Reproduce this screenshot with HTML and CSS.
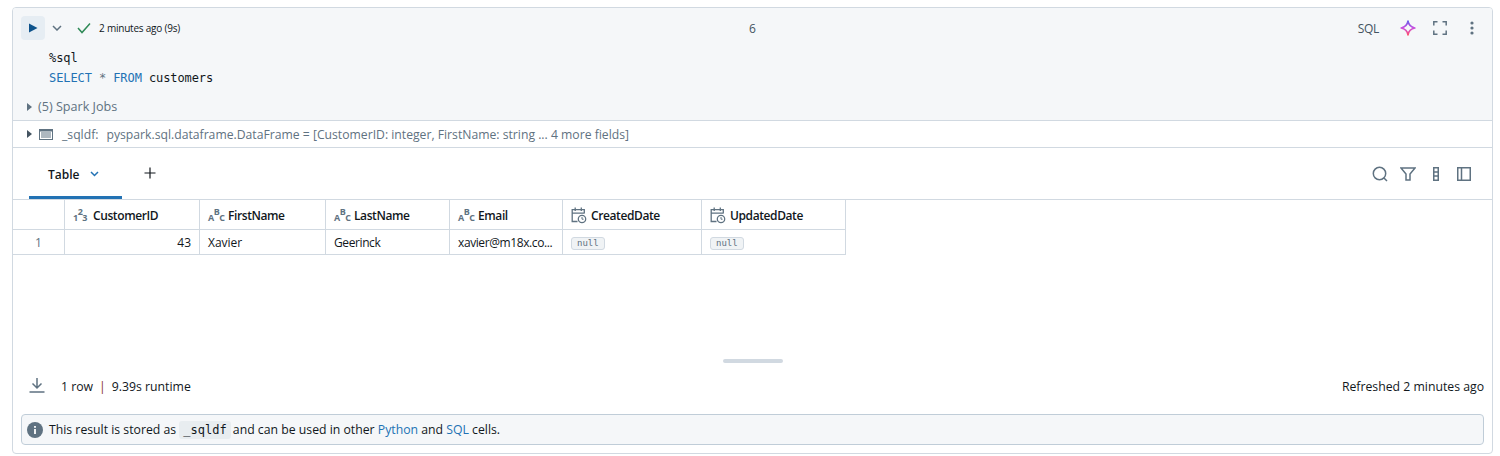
FILE: index.html
```html
<!DOCTYPE html>
<html lang="en">
<head>
<meta charset="utf-8">
<title>Notebook cell</title>
<link rel="stylesheet" href="styles.css">
</head>
<body>
<section class="cell">
  <div class="cell-top">
    <div class="toolbar">
      <div class="toolbar-left">
        <button class="run-btn" aria-label="Run"><svg width="10" height="10" viewBox="0 0 10 10"><path d="M1 0.5 L9.5 5 L1 9.5Z" fill="#0e538b"/></svg></button>
        <svg class="chev" width="10" height="6" viewBox="0 0 10 6"><path d="M1 1 L5 5 L9 1" fill="none" stroke="#5f7281" stroke-width="1.5"/></svg>
        <svg class="check" width="14" height="12" viewBox="0 0 14 12"><path d="M1 6 L5 10.5 L13 1.5" fill="none" stroke="#2f8a57" stroke-width="1.5"/></svg>
        <span class="run-status">2 minutes ago (9s)</span>
      </div>
      <div class="cell-num">6</div>
      <div class="toolbar-right">
        <span class="lang">SQL</span>
        <svg class="ai" width="16" height="16" viewBox="0 0 16 16"><defs><linearGradient id="spark" x1="0" y1="0" x2="0" y2="1"><stop offset="0" stop-color="#6a5ce8"/><stop offset=".5" stop-color="#c94fe0"/><stop offset="1" stop-color="#ff4f6e"/></linearGradient></defs><path d="M8 1.2 Q9 6.9 14.8 8 Q9 9.1 8 14.8 Q7 9.1 1.2 8 Q7 6.9 8 1.2Z" fill="none" stroke="url(#spark)" stroke-width="1.7" stroke-linejoin="round"/></svg>
        <svg class="full" width="14" height="14" viewBox="0 0 14 14"><path d="M0.8 4.5 V0.8 H4.5 M9.5 0.8 H13.2 V4.5 M13.2 9.5 V13.2 H9.5 M4.5 13.2 H0.8 V9.5" fill="none" stroke="#5f7281" stroke-width="1.5"/></svg>
        <svg class="kebab" width="4" height="14" viewBox="0 0 4 14"><circle cx="2" cy="2" r="1.6" fill="#5f7281"/><circle cx="2" cy="7" r="1.6" fill="#5f7281"/><circle cx="2" cy="12" r="1.6" fill="#5f7281"/></svg>
      </div>
    </div>
    <pre class="code">%sql
<span class="kw">SELECT</span> <span class="op">*</span> <span class="kw">FROM</span> customers</pre>
    <div class="jobs"><span class="tri"></span>(5) Spark Jobs</div>
  </div>

  <div class="schema">
    <span class="tri dark"></span>
    <svg class="df-icon" width="14" height="11" viewBox="0 0 14 11"><rect x=".5" y=".5" width="13" height="10" fill="#fff" stroke="#5f7281"/><path d="M0 1.5H14M2 4H12M2 6H12M2 8H12" stroke="#5f7281" stroke-width="1.2"/><rect x="0" y="0" width="14" height="2.5" fill="#5f7281"/></svg>
    <span class="df-name">_sqldf:</span>
    <span class="df-type">pyspark.sql.dataframe.DataFrame = [CustomerID: integer, FirstName: string ... 4 more fields]</span>
  </div>

  <div class="tabs">
    <div class="tab-list">
      <div class="tab">Table <svg class="tab-chev" width="9" height="6" viewBox="0 0 9 6"><path d="M1 1 L4.5 4.5 L8 1" fill="none" stroke="#2272b4" stroke-width="1.5"/></svg></div>
      <svg class="plus" width="12" height="12" viewBox="0 0 12 12"><path d="M6 .5V11.5M.5 6H11.5" stroke="#11171c" stroke-width="1.2"/></svg>
    </div>
    <div class="tab-tools">
      <svg width="16" height="16" viewBox="0 0 16 16"><circle cx="7.5" cy="7.5" r="6.2" fill="none" stroke="#5f7281" stroke-width="1.5"/><path d="M12 12 L15 15" stroke="#5f7281" stroke-width="1.5"/></svg>
      <svg width="16" height="14" viewBox="0 0 16 14"><path d="M1 1 H15 L10 7 V13 H6 V7 Z" fill="none" stroke="#5f7281" stroke-width="1.5"/></svg>
      <svg class="cols" width="6" height="14" viewBox="0 0 6 14"><rect x=".75" y=".75" width="4.5" height="12.5" fill="none" stroke="#5f7281" stroke-width="1.5"/><path d="M0 5H6M0 9H6" stroke="#5f7281" stroke-width="1.5"/></svg>
      <svg width="14" height="14" viewBox="0 0 14 14"><rect x=".75" y=".75" width="12.5" height="12.5" fill="none" stroke="#5f7281" stroke-width="1.5"/><path d="M4.5 1V13" stroke="#5f7281" stroke-width="1.5"/></svg>
    </div>
  </div>

  <div class="table-area">
    <table class="grid">
      <colgroup>
        <col class="c-idx"><col class="c-id"><col class="c-first"><col class="c-last"><col class="c-email"><col class="c-created"><col class="c-updated">
      </colgroup>
      <thead>
        <tr>
          <th></th>
          <th><span class="th-in"><span class="type"><i>1</i><i class="up">2</i><i>3</i></span>CustomerID</span></th>
          <th><span class="th-in"><span class="type"><i>A</i><i class="up">B</i><i>C</i></span>FirstName</span></th>
          <th><span class="th-in"><span class="type"><i>A</i><i class="up">B</i><i>C</i></span>LastName</span></th>
          <th><span class="th-in"><span class="type"><i>A</i><i class="up">B</i><i>C</i></span>Email</span></th>
          <th><span class="th-in"><svg class="cal" width="16" height="17" viewBox="0 0 16 17"><path d="M6.5 14.5 H1.2 V2.7 H13.3 V6.5 M1.2 6.2 H13.3 M4.2 .5 V4 M10.3 .5 V4" fill="none" stroke="#5f7281" stroke-width="1.3"/><circle cx="11" cy="12" r="3.7" fill="none" stroke="#5f7281" stroke-width="1.3"/><path d="M11 10 V12.2 H12.6" fill="none" stroke="#5f7281" stroke-width="1"/></svg>CreatedDate</span></th>
          <th><span class="th-in"><svg class="cal" width="16" height="17" viewBox="0 0 16 17"><path d="M6.5 14.5 H1.2 V2.7 H13.3 V6.5 M1.2 6.2 H13.3 M4.2 .5 V4 M10.3 .5 V4" fill="none" stroke="#5f7281" stroke-width="1.3"/><circle cx="11" cy="12" r="3.7" fill="none" stroke="#5f7281" stroke-width="1.3"/><path d="M11 10 V12.2 H12.6" fill="none" stroke="#5f7281" stroke-width="1"/></svg>UpdatedDate</span></th>
        </tr>
      </thead>
      <tbody>
        <tr>
          <td class="idx">1</td>
          <td class="right">43</td>
          <td>Xavier</td>
          <td class="tight">Geerinck</td>
          <td class="tight">xavier@m18x.co...</td>
          <td><span class="null">null</span></td>
          <td><span class="null">null</span></td>
        </tr>
      </tbody>
    </table>
    <div class="handle-row"><div class="handle"></div></div>
  </div>

  <div class="footer">
    <div class="foot-left">
      <svg class="dl" width="16" height="15" viewBox="0 0 16 15"><path d="M8 0V9.5M3.5 5.5 L8 10 L12.5 5.5M.5 14H15.5" fill="none" stroke="#5f7281" stroke-width="1.5"/></svg>
      <span>1 row<span class="sep">|</span>9.39s runtime</span>
    </div>
    <span>Refreshed 2 minutes ago</span>
  </div>

  <div class="notice">
    <svg class="info" width="16" height="16" viewBox="0 0 16 16"><circle cx="8" cy="8" r="8" fill="#5f7281"/><rect x="7.1" y="7" width="1.8" height="5" fill="#fff"/><rect x="7.1" y="4" width="1.8" height="1.8" fill="#fff"/></svg>
    <span>This result is stored as <code>_sqldf</code> and can be used in other <a href="#">Python</a> and <a href="#">SQL</a> cells.</span>
  </div>
</section>
</body>
</html>
```
FILE: styles.css
```css
* { box-sizing: border-box; }
html, body { margin: 0; padding: 0; background: #fff; }
body {
  font-family: "Open Sans", "Noto Sans", "Liberation Sans", sans-serif;
  font-size: 12.25px;
  color: #11171c;
  padding: 7px 7px 0 12px;
  height: 456px;
  overflow: hidden;
}
.cell {
  width: 1481px;
  height: 447px;
  border: 1px solid #d1d9e1;
  border-radius: 4px;
  overflow: hidden;
  display: flex;
  flex-direction: column;
}
.cell-top {
  background: #f5f7f9;
  height: 113px;
  border-bottom: 1px solid #d1d9e1;
  flex: none;
}
.toolbar {
  display: grid;
  grid-template-columns: 1fr auto 1fr;
  align-items: center;
  height: 24px;
  margin-top: 8px;
  padding: 0 18px 0 8px;
}
.toolbar-left, .toolbar-right { display: flex; align-items: center; }
.toolbar-right { justify-content: flex-end; }
.run-btn {
  width: 24px;
  height: 24px;
  border: 0;
  padding: 0;
  border-radius: 4px;
  background: #e6edf3;
  display: flex;
  align-items: center;
  justify-content: center;
}
.chev { margin-left: 7px; }
.check { margin-left: 15px; }
.run-status { margin-left: 8px; font-size: 10px; letter-spacing: -0.22px; }
.cell-num { color: #445461; font-size: 12px; margin-left: 10px; }
.lang { color: #445461; font-size: 12px; letter-spacing: -0.3px; }
.ai { margin-left: 21px; }
.full { margin-left: 17px; }
.kebab { margin-left: 23px; }
.code {
  margin: 8px 0 0 36px;
  font-family: "DejaVu Sans Mono", "Liberation Mono", monospace;
  font-size: 12px;
  letter-spacing: -0.09px;
  line-height: 20px;
  color: #11171c;
}
.kw { color: #2272b4; }
.op { color: #5f7281; }
.jobs {
  display: flex;
  align-items: center;
  margin: 10px 0 0 14px;
  color: #5f7281;
  font-size: 12.6px;
  line-height: 18px;
}
.tri {
  width: 0;
  height: 0;
  border-left: 5px solid #5f7281;
  border-top: 4px solid transparent;
  border-bottom: 4px solid transparent;
  margin-right: 6px;
}
.tri.dark { border-left-color: #445461; }
.schema {
  display: flex;
  align-items: center;
  height: 27px;
  padding-left: 14px;
  border-bottom: 1px solid #d1d9e1;
  color: #5f7281;
  font-size: 12.2px;
  flex: none;
}
.df-icon { margin-left: 1px; }
.df-name { margin-left: 9px; }
.df-type { margin-left: 8px; }
.tabs {
  display: flex;
  justify-content: space-between;
  height: 52px;
  padding: 0 21px 0 16px;
  border-bottom: 1px solid #d1d9e1;
  flex: none;
}
.tab-list { display: flex; align-items: center; }
.tab {
  width: 93px;
  height: 51px;
  border-bottom: 3px solid #2272b4;
  display: flex;
  align-items: center;
  padding: 4px 0 0 19px;
  gap: 11px;
  font-weight: 600;
  font-size: 12px;
}
.plus { margin-left: 22px; margin-top: -2px; }
.tab-tools { display: flex; align-items: center; gap: 12px; }
.cols { margin: 0 6px 0 5px; }
.table-area { height: 173px; flex: none; position: relative; }
.grid {
  border-collapse: separate;
  border-spacing: 0;
  table-layout: fixed;
  width: 833px;
}
.c-idx { width: 52px; }
.c-id { width: 135px; }
.c-first { width: 126px; }
.c-last { width: 124px; }
.c-email { width: 113px; }
.c-created { width: 139px; }
.c-updated { width: 144px; }
.grid th, .grid td {
  border-right: 1px solid #d1d9e1;
  border-bottom: 1px solid #d1d9e1;
  padding: 0 8px;
  text-align: left;
  white-space: nowrap;
  overflow: hidden;
  font-size: 12px;
}
.grid th { height: 30px; font-weight: 600; letter-spacing: -0.4px; padding-top: 1px; }
.grid td { height: 25px; }
.grid td.tight { letter-spacing: -0.4px; }
.th-in { display: flex; align-items: center; }
.type {
  display: inline-flex;
  flex: none;
  align-items: flex-end;
  width: 16px;
  height: 14px;
  margin-right: 4px;
  color: #5f7281;
  font-size: 9px;
  line-height: 8px;
  font-weight: 700;
  letter-spacing: -0.5px;
}
.type i { font-style: normal; }
.type i.up { margin-bottom: 6px; }
.cal { margin-right: 4px; }
.idx { color: #5f7281; text-align: center !important; padding-right: 8px !important; }
.right { text-align: right !important; }
.null {
  display: inline-block;
  font-family: "DejaVu Sans Mono", monospace;
  font-size: 9px;
  line-height: 11px;
  height: 13px;
  padding: 0 5px;
  letter-spacing: 0;
  color: #5f7281;
  background: #f0f3f5;
  border: 1px solid #d1d9e1;
  border-radius: 3px;
  vertical-align: middle;
}
.handle-row {
  position: absolute;
  left: 0;
  right: 0;
  top: 159px;
  display: flex;
  justify-content: center;
}
.handle { width: 60px; height: 4px; border-radius: 2px; background: #d1d9e1; margin-left: 1px; }
.footer {
  display: flex;
  justify-content: space-between;
  align-items: center;
  height: 26px;
  padding: 0 8px 0 16px;
  flex: none;
}
.foot-left { display: flex; align-items: center; }
.dl { margin-right: 16px; margin-top: -2px; }
.sep { color: #8c2f1f; margin: 0 6px; }
.notice {
  display: flex;
  align-items: center;
  height: 31px;
  margin: 15px 8px 0 8px;
  padding-left: 5px;
  background: #f5f7f9;
  border: 1px solid #c0cdd8;
  border-radius: 4px;
  flex: none;
}
.info { margin-right: 6px; flex: none; }
.notice code {
  font-family: "DejaVu Sans Mono", monospace;
  font-size: 12px;
  background: #e8edf0;
  padding: 2px 4px;
  border-radius: 3px;
  margin: 0 -1px 0 0;
}
.notice a { color: #2272b4; text-decoration: none; }
```
